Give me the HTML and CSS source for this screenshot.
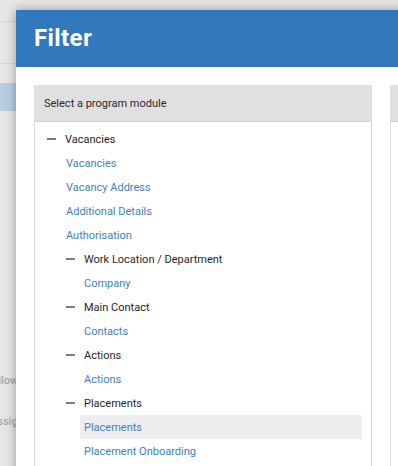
FILE: index.html
```html
<!DOCTYPE html>
<html>
<head>
<meta charset="utf-8">
<link rel="stylesheet" href="styles.css">
</head>
<body>
<div class="backdrop">
  <div class="bd-row bd-top"></div>
  <div class="bd-row bd-mid"></div>
  <div class="bd-row bd-sel"></div>
  <div class="bd-text bd-t1">Follow</div>
  <div class="bd-text bd-t2">Assign</div>
</div>
<div class="modal">
  <div class="modal-head"><h1>Filter</h1></div>
  <div class="modal-body">
    <div class="panel">
      <div class="panel-head">Select a program module</div>
      <ul class="tree">
        <li class="node l1"><span class="dash"></span>Vacancies</li>
        <li class="leaf l1c">Vacancies</li>
        <li class="leaf l1c">Vacancy Address</li>
        <li class="leaf l1c">Additional Details</li>
        <li class="leaf l1c">Authorisation</li>
        <li class="node l2"><span class="dash"></span>Work Location / Department</li>
        <li class="leaf l2c">Company</li>
        <li class="node l2"><span class="dash"></span>Main Contact</li>
        <li class="leaf l2c">Contacts</li>
        <li class="node l2"><span class="dash"></span>Actions</li>
        <li class="leaf l2c">Actions</li>
        <li class="node l2"><span class="dash"></span>Placements</li>
        <li class="leaf l2c sel">Placements</li>
        <li class="leaf l2c">Placement Onboarding</li>
      </ul>
    </div>
    <div class="panel panel2">
      <div class="panel-head"></div>
    </div>
  </div>
</div>
</body>
</html>
```
FILE: styles.css
```css
html, body {
  margin: 0;
  padding: 0;
  width: 398px;
  height: 466px;
  overflow: hidden;
  font-family: Roboto, "Liberation Sans", sans-serif;
}
body {
  background: #e4e4e4;
  position: relative;
}
.backdrop {
  position: absolute;
  inset: 0;
  background: #e6e6e6;
}
.bd-row {
  position: absolute;
  left: 0;
  width: 30px;
}
.bd-top {
  top: 21px;
  height: 1px;
  background: #d6d6d6;
}
.bd-mid {
  top: 63px;
  height: 1px;
  background: #d6d6d6;
}
.bd-sel {
  top: 83px;
  height: 28px;
  background: #b9cde2;
}
.bd-text {
  position: absolute;
  font-size: 11px;
  font-weight: 500;
  color: #a3a9b0;
  white-space: nowrap;
}
.bd-t1 { top: 374px; left: -14px; }
.bd-t2 { top: 415px; left: -10px; }

.modal {
  position: absolute;
  left: 16px;
  top: 10px;
  width: 420px;
  height: 480px;
  background: #fff;
  box-shadow: 0 0 10px rgba(0, 0, 0, 0.35);
}
.modal-head {
  height: 57px;
  background: #3278bc;
  display: flex;
  align-items: center;
  padding-left: 18px;
}
.modal-head h1 {
  margin: 0;
  color: #fff;
  font-size: 24px;
  font-weight: 700;
  letter-spacing: 0.4px;
  position: relative;
  top: -1px;
}
.modal-body {
  display: flex;
  gap: 18px;
  padding: 18px 0 0 18px;
}
.panel {
  flex: none;
  width: 336px;
  border: 1px solid #dcdcdc;
  border-top: none;
  height: 400px;
}
.panel2 {
  width: 100px;
}
.panel-head {
  height: 36px;
  background: #e0e0e0;
  border-bottom: 1px solid #d2d2d2;
  font-size: 11px;
  color: #2a2a2a;
  display: flex;
  align-items: center;
  padding-left: 9px;
}
.tree {
  list-style: none;
  margin: 0;
  padding: 5px 9px 0 0;
}
.tree li {
  height: 24px;
  display: flex;
  align-items: center;
  font-size: 11px;
  white-space: nowrap;
}
.node {
  color: #1f1f1f;
}
.leaf {
  color: #3d7ecb;
}
.dash {
  width: 9px;
  height: 2px;
  background: #7a7a7a;
  margin-right: 9px;
}
.l1 { padding-left: 12px; }
.l1c { padding-left: 31px; }
.l2 { padding-left: 31px; }
.l2c { padding-left: 49px; }
.tree li.sel {
  margin-left: 45px;
  padding-left: 4px;
  background: #eeeeee;
}
```
